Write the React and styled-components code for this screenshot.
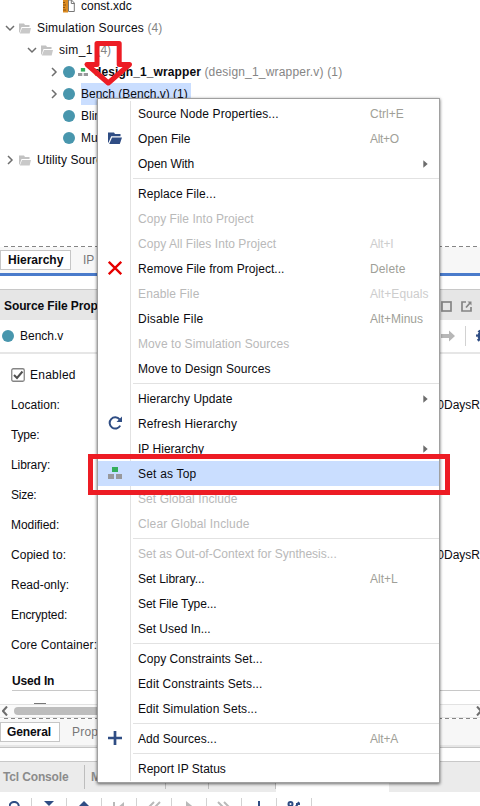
import React from "react";
import styled, { createGlobalStyle } from "styled-components";

const GlobalStyle = createGlobalStyle`
  * { box-sizing: border-box; }
  body { margin: 0; background: #fff; }
`;

const INK = "#0b0b10";
const NAVY = "#2f4d84";
const SELECT = "#cadeff";
const RED = "#ed1c24";

const Window = styled.div`
  position: relative;
  width: 480px;
  height: 806px;
  overflow: hidden;
  display: flex;
  flex-direction: column;
  background: #fff;
  color: ${INK};
  font: 12px/16px "Liberation Sans", Arial, sans-serif;
  white-space: nowrap;
  svg { display: block; flex: none; }
`;

const Text = styled.span`
  letter-spacing: ${(p) => p.$track || 0}px;
  color: ${(p) => p.$color || "inherit"};
  font-weight: ${(p) => (p.$bold ? 700 : 400)};
  white-space: pre;
`;

/* ---------- Sources tree ---------- */

const Tree = styled.div`
  height: 246px;
  flex: none;
  overflow: hidden;
  display: flex;
  flex-direction: column;
`;

const TreeRow = styled.div`
  height: 22px;
  flex: none;
  display: flex;
  align-items: center;
  padding-left: ${(p) => p.$indent}px;
  &:first-child { margin-top: -5px; }
`;

const Slot = styled.span`
  width: ${(p) => p.$w}px;
  flex: none;
  display: flex;
`;

const Label = styled.span`
  height: 22px;
  display: flex;
  align-items: center;
  padding-right: 3px;
  background: ${SELECT};
`;

const Dot = styled.span`
  width: 12px;
  height: 12px;
  flex: none;
  border-radius: 50%;
  background: #4896ad;
`;

const Chevron = ({ open }) => (
  <svg width="10" height="10" viewBox="0 0 10 10" fill="none" stroke="#6e6e6e" strokeWidth="1.5">
    <path d={open ? "M1 3 L5 7 L9 3" : "M3 1 L7 5 L3 9"} />
  </svg>
);

const Folder = () => (
  <svg width="12" height="11" viewBox="0 0 12 11">
    <path d="M0 10V0.5H5L6 2H10.5V4H2.5L0.8 9Z" fill="#c2c2c2" />
    <path d="M3 5H12L10.6 10.5H0.8Z" fill="#c9c9c9" />
  </svg>
);

const OpenFolder = () => (
  <svg width="14" height="12" viewBox="0 0 14 12" fill={NAVY}>
    <path d="M0 11V0.5H6L7 2H12.5V4.3H3.2L0.8 10Z" />
    <path d="M4 5.5H14L11.8 12H1.2Z" />
  </svg>
);

const ConstraintFile = () => (
  <svg width="12" height="13" viewBox="0 0 12 13">
    <path d="M5.5 0V11.5H11.3V3L8.5 0Z" fill="#fff" stroke="#777" />
    <path d="M8.3 0V3.5H11.5" fill="none" stroke="#777" />
    <rect x="0" y="0" width="5" height="12.5" fill="#dc8b20" />
    <path d="M0 2.5H2M0 5H3M0 7.5H2M0 10H3" stroke="#8c5311" />
  </svg>
);

const TopModule = ({ w = 14 }) => (
  <svg width={w} height={(w * 12) / 14} viewBox="0 0 14 12">
    <rect x="4" y="0" width="6" height="5" fill="#34ae5b" />
    <rect x="0" y="7" width="6" height="5" fill="#98989b" />
    <rect x="8" y="7" width="6" height="5" fill="#98989b" />
  </svg>
);

const SourceTree = () => (
  <Tree>
    <TreeRow $indent={63}>
      <Slot $w={18}><ConstraintFile /></Slot>
      <Text>const.xdc</Text>
    </TreeRow>
    <TreeRow $indent={5}>
      <Slot $w={14}><Chevron open /></Slot>
      <Slot $w={18}><Folder /></Slot>
      <Text $track={0.2}>Simulation Sources </Text>
      <Text $color="#858585">(4)</Text>
    </TreeRow>
    <TreeRow $indent={27}>
      <Slot $w={14}><Chevron open /></Slot>
      <Slot $w={18}><Folder /></Slot>
      <Text $track={0.35}>sim_1 </Text>
      <Text $color="#858585">(4)</Text>
    </TreeRow>
    <TreeRow $indent={49}>
      <Slot $w={14}><Chevron /></Slot>
      <Slot $w={15}><Dot /></Slot>
      <Slot $w={16}><TopModule w={10} /></Slot>
      <Text $bold $track={0.1}>design_1_wrapper </Text>
      <Text $color="#858585" $track={0.19}>(design_1_wrapper.v) (1)</Text>
    </TreeRow>
    <TreeRow $indent={49}>
      <Slot $w={14}><Chevron /></Slot>
      <Slot $w={18}><Dot /></Slot>
      <Label><Text>Bench (Bench.v) (1)</Text></Label>
    </TreeRow>
    <TreeRow $indent={63}>
      <Slot $w={18}><Dot /></Slot>
      <Text>Blink</Text>
    </TreeRow>
    <TreeRow $indent={63}>
      <Slot $w={18}><Dot /></Slot>
      <Text>Mux</Text>
    </TreeRow>
    <TreeRow $indent={5}>
      <Slot $w={14}><Chevron /></Slot>
      <Slot $w={18}><Folder /></Slot>
      <Text $track={0.1}>Utility Sources</Text>
    </TreeRow>
  </Tree>
);

/* ---------- Tab strips ---------- */

const Dashes = styled.div`
  height: 1px;
  flex: none;
  margin-left: 4px;
  background: repeating-linear-gradient(90deg, #858585 0 4px, #fff 4px 7px);
`;

const TabStrip = styled.div`
  height: ${(p) => p.$h}px;
  flex: none;
  display: flex;
  align-items: flex-start;
  padding-top: 3px;
  background: #f7f7f7;
`;

const Tab = styled.div`
  width: ${(p) => p.$w}px;
  height: 20px;
  flex: none;
  display: flex;
  align-items: center;
  padding-left: ${(p) => p.$pad}px;
  border: 1px solid ${(p) => (p.$active ? "#c6c6c6" : "transparent")};
  background: ${(p) => (p.$active ? "#fff" : "transparent")};
  color: ${(p) => (p.$active ? INK : "#777")};
`;

const Band = styled.div`
  height: ${(p) => p.$h}px;
  flex: none;
  background: ${(p) => p.$bg};
`;

/* ---------- Properties ---------- */

const PanelHeader = styled.div`
  height: 31px;
  flex: none;
  display: flex;
  align-items: center;
  justify-content: space-between;
  padding: 2px 8px 0 4px;
  border-top: 1px solid #c8c8c8;
  background: #e6e6e6;
`;

const FileBar = styled.div`
  height: 34px;
  flex: none;
  display: flex;
  align-items: center;
  padding-left: 2px;
  border-bottom: 2px solid #e6e6e6;
`;

const Tools = styled.div`
  display: flex;
  align-items: center;
  gap: ${(p) => p.$gap}px;
  margin-left: auto;
  margin-right: ${(p) => p.$mr || 0}px;
`;

const Divider = styled.span`
  width: 1px;
  height: ${(p) => p.$h}px;
  flex: none;
  background: ${(p) => p.$color || "#d2d2d2"};
`;

const Form = styled.div`
  height: 350px;
  flex: none;
  overflow: hidden;
  display: flex;
  flex-direction: column;
  padding: 6px 0 0 11px;
`;

const Field = styled.div`
  height: 30px;
  flex: none;
  display: flex;
  align-items: center;
  justify-content: space-between;
`;

const CheckField = styled.div`
  height: 30px;
  flex: none;
  display: flex;
  align-items: center;
  gap: 5px;
`;

const Section = styled.div`
  height: 25px;
  flex: none;
  display: flex;
  align-items: center;
  margin: 6px 0 0 1px;
  padding-top: 6px;
  border-bottom: 1px solid #c8c8c8;
`;

const BoxTop = styled.div`
  width: 12px;
  height: 1px;
  flex: none;
  margin: 12px 0 0 23px;
  background: #777;
`;

const ScrollTrack = styled.div`
  height: 14px;
  flex: none;
  display: flex;
  align-items: center;
  padding: 0 0 0 2px;
  border-top: 1px solid #e2e2e2;
  border-bottom: 1px solid #e6e6e6;
  background: #fafafa;
`;

const Thumb = styled.div`
  width: 420px;
  height: 8px;
  margin: 0 42px 0 6px;
  flex: none;
  border-radius: 4px;
  background: #bdbdbd;
`;

const fields = [
  ["Location:", 0.03, true],
  ["Type:", -0.2],
  ["Library:", -0.1],
  ["Size:", -0.25],
  ["Modified:", -0.05],
  ["Copied to:", 0.03, true],
  ["Read-only:", 0],
  ["Encrypted:", -0.12],
  ["Core Container:", 0.09],
];

const Properties = () => (
  <>
    <PanelHeader>
      <Text $bold $track={-0.1}>Source File Properties</Text>
      <Tools $gap={9}>
        <svg width="11" height="11" viewBox="0 0 11 11" fill="none" stroke="#858585" strokeWidth="1.7">
          <rect x="1" y="1" width="9" height="9" />
        </svg>
        <svg width="11" height="11" viewBox="0 0 11 11" fill="none" stroke="#858585" strokeWidth="1.7">
          <path d="M5 1H1V10H10V6M5 6.5L9 2" />
          <path d="M6.5 0.5H10.5V4.5Z" fill="#858585" stroke="none" />
        </svg>
      </Tools>
    </PanelHeader>
    <FileBar>
      <Slot $w={18}><Dot /></Slot>
      <Text>Bench.v</Text>
      <Tools $gap={10} $mr={-10}>
        <svg width="14" height="12" viewBox="0 0 14 12" fill="#b7b7b7">
          <path d="M0 4H8V0.5L14 6L8 11.5V8H0Z" />
        </svg>
        <Divider $h={20} />
        <svg width="14" height="14" viewBox="0 0 14 14" fill="none" stroke={NAVY}>
          <circle cx="7" cy="7" r="4" strokeWidth="3" />
          <circle cx="7" cy="7" r="6" strokeWidth="2" strokeDasharray="2.4 2.31" strokeDashoffset="1.2" />
        </svg>
      </Tools>
    </FileBar>
    <Form>
      <CheckField>
        <svg width="14" height="14" viewBox="0 0 14 14" fill="none">
          <rect x="0.75" y="0.75" width="12.5" height="12.5" rx="1.5" stroke="#858585" strokeWidth="1.3" fill="#fff" />
          <path d="M3 7L6 10L11.5 3.5" stroke="#505050" strokeWidth="2" />
        </svg>
        <Text $track={0.25}>Enabled</Text>
      </CheckField>
      {fields.map(([name, track, path]) => (
        <Field key={name}>
          <Text $track={track}>{name}</Text>
          {path && <Text>00DaysR</Text>}
        </Field>
      ))}
      <Section><Text $bold $track={-0.15}>Used In</Text></Section>
      <BoxTop />
    </Form>
    <ScrollTrack>
      <svg width="6" height="10" viewBox="0 0 6 10" fill="none" stroke="#6e6e6e" strokeWidth="2">
        <path d="M5 0.5L1 5L5 9.5" />
      </svg>
      <Thumb />
      <svg width="6" height="10" viewBox="0 0 6 10" fill="none" stroke="#6e6e6e" strokeWidth="2">
        <path d="M1 0.5L5 5L1 9.5" />
      </svg>
    </ScrollTrack>
  </>
);

/* ---------- Console ---------- */

const ConsoleTabs = styled.div`
  height: 31px;
  flex: none;
  display: flex;
  border-top: 1px solid #c8c8c8;
  background: #ebebeb;
`;

const ConsoleTab = styled.div`
  width: ${(p) => p.$w}px;
  flex: none;
  display: flex;
  align-items: center;
  justify-content: space-between;
  padding-left: ${(p) => p.$pad || 0}px;
  background: ${(p) => (p.$active ? "#fff" : "transparent")};
`;

const ToolRow = styled.div`
  height: 14px;
  flex: none;
  overflow: hidden;
  display: flex;
  padding-top: 6px;
`;

const ToolCell = styled.div`
  width: ${(p) => p.$w || 35}px;
  height: 20px;
  flex: none;
  display: flex;
  justify-content: center;
  padding-top: 3px;
  border-right: 1px solid #d2d2d2;
`;

const consoleTabs = [
  { name: "Tcl Console", w: 85, pad: 3 },
  { name: "M", w: 81, pad: 6 },
  { name: "", w: 43 },
  { name: "", w: 67 },
];

const consoleIcons = [
  <g fill="none" stroke={NAVY} strokeWidth="2"><circle cx="5.2" cy="5.5" r="4.6" /><path d="M8.5 9L13 14" /></g>,
  <g fill={NAVY}><path d="M2 0H12L7 5Z" /><path d="M2 12L7 7L12 12Z" /></g>,
  <g fill={NAVY}><path d="M2 5L7 0L12 5Z" /><path d="M2 8H12L7 13Z" /></g>,
  <g fill="#b9b9b9"><rect x="1" y="1" width="2" height="12" /><path d="M12 1V13L5 7Z" /></g>,
  <g fill="none" stroke="#b9b9b9" strokeWidth="2"><path d="M7 1L2 6L7 11M13 1L8 6L13 11" /></g>,
  <path d="M4 0L12 6.5L4 13Z" fill="#b9b9b9" />,
  <g fill="none" stroke="#b9b9b9" strokeWidth="2"><path d="M1 1L6 6L1 11M7 1L12 6L7 11" /></g>,
  <path d="M6 0H8V6H12L7 12L2 6H6Z" fill={NAVY} />,
  <g fill="none" stroke={NAVY} strokeWidth="2"><circle cx="3.5" cy="3" r="2" /><path d="M12 1L4 13M9 3H13" /></g>,
];

const Console = () => (
  <>
    <ConsoleTabs>
      {consoleTabs.map((tab, i) => (
        <ConsoleTab key={i} $w={tab.w} $pad={tab.pad}>
          <Text $bold $track={-0.15} $color="#8b8b8b">{tab.name}</Text>
          <Divider $h={24} $color="#bdbdbd" />
        </ConsoleTab>
      ))}
      <ConsoleTab $w={113} $active />
    </ConsoleTabs>
    <ToolRow>
      {consoleIcons.map((icon, i) => (
        <ToolCell key={i} $w={i === 0 ? 32 : 35}>
          <svg width="14" height="14" viewBox="0 0 14 14">{icon}</svg>
        </ToolCell>
      ))}
    </ToolRow>
  </>
);

/* ---------- Context menu ---------- */

const Menu = styled.div`
  position: absolute;
  left: 97px;
  top: 98px;
  width: 343px;
  height: 685px;
  padding: 2px 0 0;
  border: 1px solid #a0a0a0;
  background: linear-gradient(90deg, transparent 32px, #e2e2e2 32px 33px, transparent 33px) 0 2px / 100% 680px no-repeat #fff;
  box-shadow: 0 1px 3px rgba(0, 0, 0, 0.6);
`;

const Item = styled.div`
  height: 25px;
  display: grid;
  grid-template-columns: 33px 1fr 70px;
  align-items: center;
  color: ${(p) => (p.$disabled ? "#b9b9b9" : INK)};
  background: ${(p) => (p.$selected ? SELECT : "transparent")};
`;

const IconCell = styled.span`
  display: flex;
  padding: 0 0 2px 10px;
`;

const Caption = styled.span`
  padding-left: 7px;
`;

const Shortcut = styled.span`
  display: flex;
  align-items: center;
  margin-left: ${(p) => (p.$arrow ? 54 : 1)}px;
  color: ${(p) => (p.$disabled ? "#cdcdcd" : "#a09f98")};
`;

const Rule = styled.div`
  height: 5px;
  margin-left: 35px;
  background: linear-gradient(#e2e2e2, #e2e2e2) 0 2px / 100% 1px no-repeat;
`;

const Submenu = () => (
  <svg width="5" height="8" viewBox="0 0 5 8"><path d="M0.3 0.3L4.7 4L0.3 7.7Z" fill="#6c6c6c" /></svg>
);

const Cross = () => (
  <svg width="14" height="14" viewBox="0 0 14 14" fill="none" stroke="#e60000" strokeWidth="2.3">
    <path d="M0.8 0.8L13.2 13.2M13.2 0.8L0.8 13.2" />
  </svg>
);

const Refresh = () => (
  <svg width="14" height="14" viewBox="0 0 14 14">
    <path d="M11.6 3.4A5.6 5.6 0 1 0 12.2 9.6" fill="none" stroke={NAVY} strokeWidth="2" />
    <path d="M14 0.5V6H8.5Z" fill={NAVY} />
  </svg>
);

const Plus = () => (
  <svg width="14" height="14" viewBox="0 0 14 14"><path d="M0 7H14M7 0V14" stroke={NAVY} strokeWidth="2.7" /></svg>
);

const menu = [
  { t: "Source Node Properties...", k: "Ctrl+E", track: 0.1 },
  { t: "Open File", k: "Alt+O", track: 0.05, kt: -0.3, icon: <OpenFolder /> },
  { t: "Open With", sub: true, track: -0.05 },
  null,
  { t: "Replace File...", track: 0.09 },
  { t: "Copy File Into Project", off: true, track: 0.04 },
  { t: "Copy All Files Into Project", off: true, k: "Alt+I", track: 0.05, kt: -0.2 },
  { t: "Remove File from Project...", k: "Delete", track: 0.04, kt: 0.14, icon: <Cross /> },
  { t: "Enable File", off: true, k: "Alt+Equals", track: 0.13, kt: 0.08 },
  { t: "Disable File", k: "Alt+Minus", track: 0.23 },
  { t: "Move to Simulation Sources", off: true, track: 0.07 },
  { t: "Move to Design Sources", track: 0.08 },
  null,
  { t: "Hierarchy Update", sub: true, track: 0.07 },
  { t: "Refresh Hierarchy", track: 0.14, icon: <Refresh /> },
  { t: "IP Hierarchy", sub: true, track: 0.02 },
  { t: "Set as Top", sel: true, track: 0.2, icon: <TopModule /> },
  { t: "Set Global Include", off: true, track: 0.08 },
  { t: "Clear Global Include", off: true, track: 0.14 },
  null,
  { t: "Set as Out-of-Context for Synthesis...", off: true },
  { t: "Set Library...", k: "Alt+L", track: -0.04 },
  { t: "Set File Type...", track: -0.08 },
  { t: "Set Used In..." },
  null,
  { t: "Copy Constraints Set...", track: 0.05 },
  { t: "Edit Constraints Sets...", track: 0.1 },
  { t: "Edit Simulation Sets...", track: 0.09 },
  null,
  { t: "Add Sources...", k: "Alt+A", kt: -0.17, icon: <Plus /> },
  null,
  { t: "Report IP Status" },
];

const ContextMenu = () => (
  <Menu>
    {menu.map((m, i) =>
      m === null ? (
        <Rule key={i} />
      ) : (
        <Item key={i} $disabled={m.off} $selected={m.sel}>
          <IconCell>{m.icon}</IconCell>
          <Caption><Text $track={m.track}>{m.t}</Text></Caption>
          <Shortcut $disabled={m.off} $arrow={m.sub}>
            {m.sub ? <Submenu /> : <Text $track={m.kt}>{m.k}</Text>}
          </Shortcut>
        </Item>
      )
    )}
  </Menu>
);

/* ---------- Annotations ---------- */

const Highlight = styled.div`
  position: absolute;
  left: 88px;
  top: 454px;
  width: 362px;
  height: 41px;
  border: 5px solid ${RED};
`;

const Pointer = styled.svg`
  position: absolute;
  left: 82px;
  top: 40px;
`;

export default function App() {
  return (
    <>
      <GlobalStyle />
      <Window>
        <SourceTree />
        <Dashes />
        <TabStrip $h={26}>
          <Tab $w={71} $pad={7} $active><Text $bold>Hierarchy</Text></Tab>
          <Tab $w={110} $pad={11}><Text>IP Sources</Text></Tab>
        </TabStrip>
        <Band $h={3} $bg="#4a7bcb" />
        <Band $h={13} $bg="#fff" />
        <Properties />
        <Dashes />
        <TabStrip $h={26}>
          <Tab $w={60} $pad={6} $active><Text $bold $track={-0.1}>General</Text></Tab>
          <Tab $w={110} $pad={11}><Text $track={0.2}>Properties</Text></Tab>
        </TabStrip>
        <Band $h={2} $bg="#e6e6e6" />
        <Band $h={1} $bg="#c4c4c4" />
        <Band $h={13} $bg="#fff" />
        <Console />
        <ContextMenu />
        <Highlight />
        <Pointer width="54" height="48" viewBox="0 0 54 48">
          <path
            d="M15 3.5H37.2V24.5H47.5L26.3 43L5 24.5H15Z"
            fill="none"
            stroke={RED}
            strokeWidth="5"
            strokeLinejoin="round"
          />
        </Pointer>
      </Window>
    </>
  );
}
